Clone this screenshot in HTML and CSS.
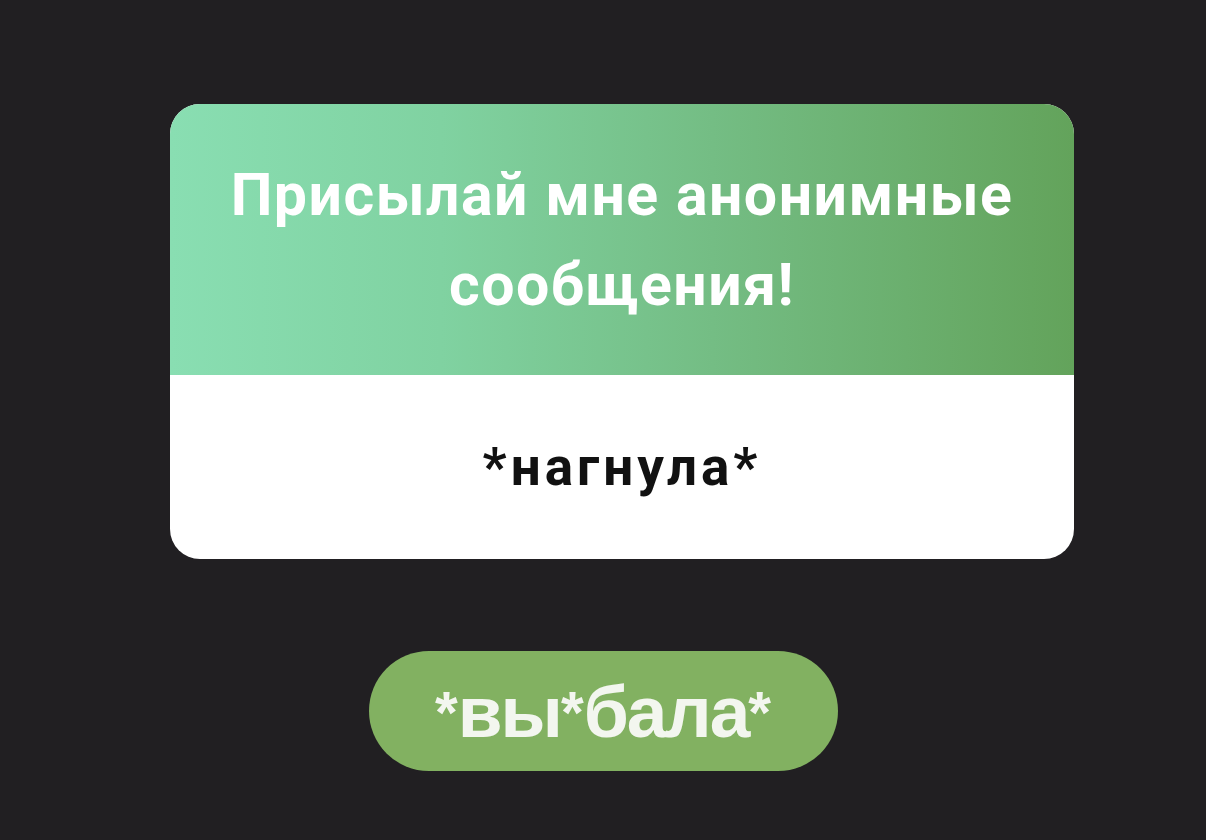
FILE: index.html
```html
<!DOCTYPE html>
<html lang="ru">
<head>
  <meta charset="UTF-8" />
  <meta name="viewport" content="width=device-width, initial-scale=1.0"/>
  <title>Анонимные сообщения</title>
  <link rel="stylesheet" href="styles.css">
</head>
<body>
  <main class="page">
    <section class="card">
      <div class="card-head">
        <h1>Присылай мне анонимные сообщения!</h1>
      </div>
      <div class="card-body">
        <p class="answer">*нагнула*</p>
      </div>
    </section>

    <button class="pill"><span class="star">*</span>вы<span class="star">*</span>бала<span class="star">*</span></button>
  </main>
</body>
</html>
```

FILE: styles.css
```css
html, body {
  margin: 0;
  height: 100%;
}
body {
  background-color: #211f22;
  font-family: Roboto, "Noto Sans", Arial, sans-serif;
}
.page {
  display: flex;
  flex-direction: column;
  align-items: flex-start;
  padding-top: 104px;
}
.card {
  width: 904px;
  margin-left: 170px;
  border-radius: 30px;
  overflow: hidden;
  background: #fff;
}
.card-head {
  height: 271px;
  display: flex;
  align-items: center;
  justify-content: center;
  background: linear-gradient(90deg, #89deb2 0%, #80d2a1 30%, #74bd84 60%, #63a35b 100%);
}
.card-head h1 {
  margin: 0;
  padding: 0 30px;
  color: #fff;
  font-size: 59px;
  font-weight: 700;
  letter-spacing: 1.5px;
  line-height: 90px;
  text-align: center;
}
.card-body {
  height: 184px;
  display: flex;
  align-items: center;
  justify-content: center;
}
.answer {
  margin: 0;
  color: #111;
  font-size: 53px;
  font-weight: 700;
  letter-spacing: 4px;
}
.pill {
  align-self: center;
  margin-top: 92px;
  width: 469px;
  height: 120px;
  padding: 0;
  border: none;
  border-radius: 60px;
  background: #82b161;
  color: #f3f6ef;
  font-family: "Liberation Sans", Arial, sans-serif;
  font-size: 73px;
  font-weight: 700;
  letter-spacing: -2px;
  cursor: pointer;
}
.pill .star {
  font-size: 0.8em;
  vertical-align: 4px;
  letter-spacing: 0;
}
```
